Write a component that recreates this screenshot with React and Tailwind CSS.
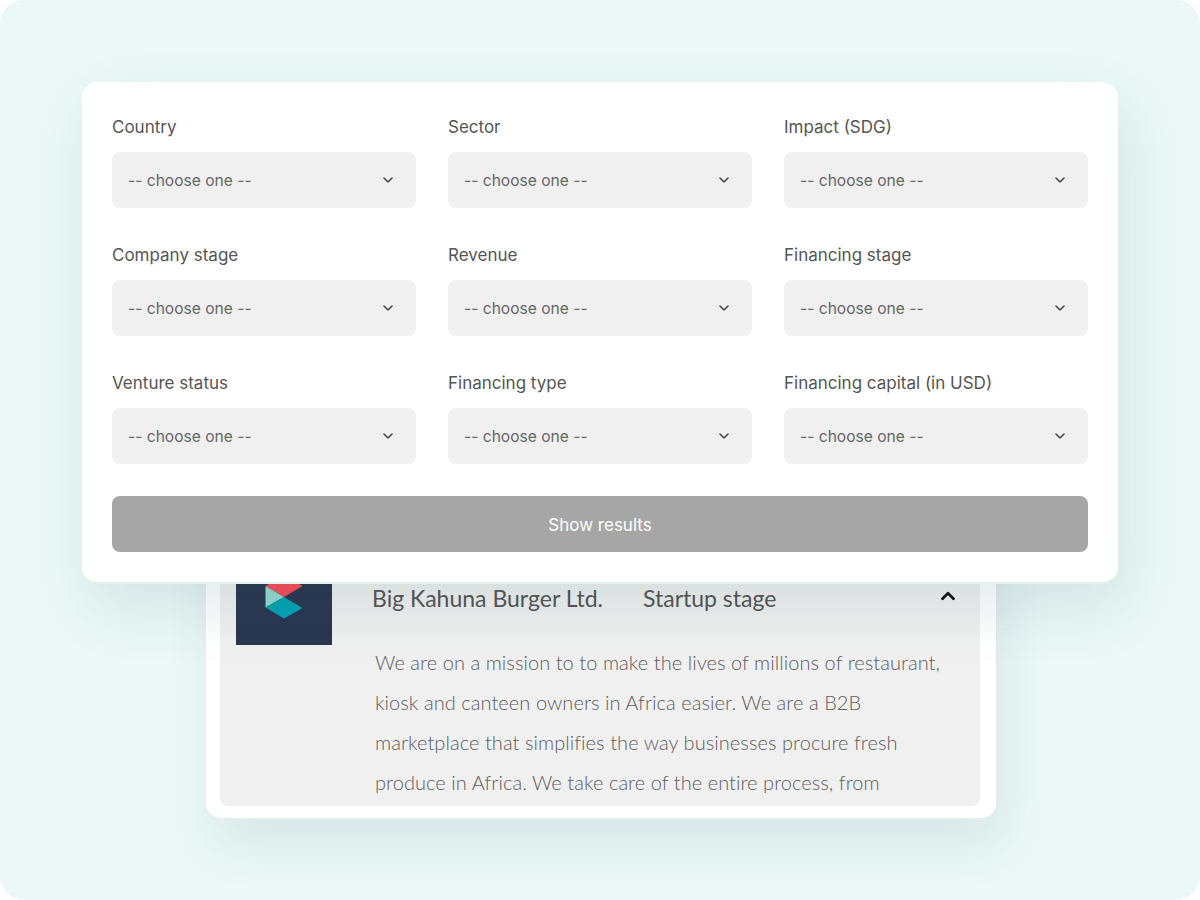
import React from 'react';
import { ChevronDown, ChevronUp } from 'lucide-react';

const fields = [
  'Country', 'Sector', 'Impact (SDG)',
  'Company stage', 'Revenue', 'Financing stage',
  'Venture status', 'Financing type', 'Financing capital (in USD)',
];

const Field = ({ label }) => (
  <div className="flex flex-col">
    <label className="h-[24px] mb-[16px] text-[17px] leading-[30px] text-[#555555]">{label}</label>
    <div className="h-[56px] flex items-center justify-between pl-[16px] pr-[20px] rounded-[8px] bg-[#f0f0f0] text-[15.6px] text-[#666666]">
      <span className="pt-[2px]">-- choose one --</span>
      <ChevronDown size={16} strokeWidth={2.4} className="text-[#444444]" />
    </div>
  </div>
);

const Logo = () => (
  <div className="w-[96px] h-[96px] shrink-0 bg-[#2a3650]">
    <svg width="96" height="96" viewBox="0 0 96 96">
      <polygon points="29.5,37 48,48 66.5,37 48,26" fill="#f84c58" />
      <polygon points="29.5,37 48,48 29.5,58.5" fill="#93d9d0" />
      <polygon points="48,48 66.5,59 48,69.5 29.5,58.5" fill="#03a3b5" />
    </svg>
  </div>
);

export default function App() {
  return (
    <div className="w-[1200px] h-[900px] bg-white overflow-hidden font-['Inter',sans-serif]">
      <div className="h-full rounded-[24px] bg-[#ecf8f8] pt-[82px] flex flex-col items-center">
        <div className="relative z-10 w-[1036px] h-[502px] p-[30px] pb-[29px] pt-[30px] bg-white rounded-[16px] border-b-2 border-[#e1f0ef] shadow-[8px_24px_60px_rgba(30,80,80,0.12)]">
          <div className="grid grid-cols-3 gap-x-[32px] gap-y-[32px]">
            {fields.map((f) => <Field key={f} label={f} />)}
          </div>
          <button className="mt-[32px] w-full h-[56px] pt-[3px] rounded-[8px] bg-[#a6a6a6] text-[17px] text-white">
            Show results
          </button>
        </div>

        <div className="-mt-[65px] ml-[2px] w-[790px] h-[301px] pl-[14px] pr-[16px] pt-[14px] pb-[12px] bg-white rounded-[16px] border-b-2 border-[#e1f0ef] shadow-[8px_24px_50px_rgba(30,80,80,0.1)]">
          <div className="h-full flex gap-[40px] pl-[16px] pt-[16px] rounded-[8px] bg-[#f0f0f0] overflow-hidden">
            <Logo />
            <div className="flex-1 pt-[33px] pr-[21px] font-['Lato',sans-serif]">
              <div className="flex items-center h-[32px] text-[23px] text-[#555555]">
                <span>Big Kahuna Burger Ltd.</span>
                <span className="ml-[40px]">Startup stage</span>
                <ChevronUp size={22} strokeWidth={3} className="ml-auto -mt-[4px] text-[#111111]" />
              </div>
              <p className="mt-[28px] pl-[3px] text-[20px] leading-[40px] tracking-[0.06px] font-light text-[#5c5c5c] whitespace-nowrap">
                We are on a mission to to make the lives of millions of restaurant,<br />
                kiosk and canteen owners in Africa easier. We are a B2B<br />
                marketplace that simplifies the way businesses procure fresh<br />
                produce in Africa. We take care of the entire process, from
              </p>
            </div>
          </div>
        </div>
      </div>
    </div>
  );
}
